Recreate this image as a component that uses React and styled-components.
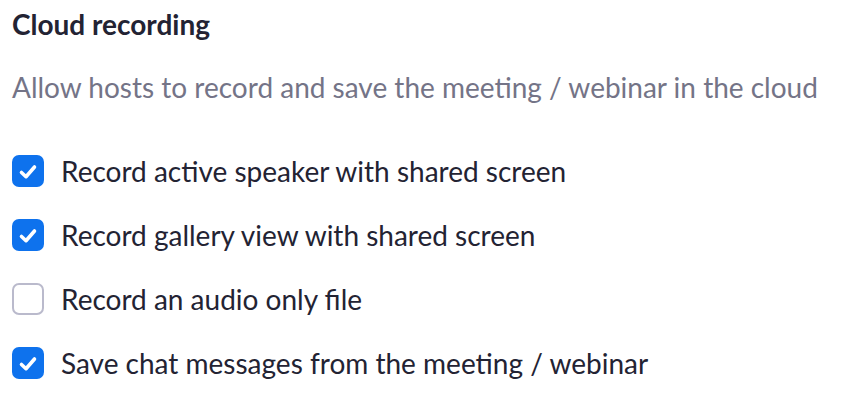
import React from 'react';
import styled, {createGlobalStyle} from "styled-components";

const GlobalStyle = createGlobalStyle`
    body {
        margin: 0;
        background: #fff;
        font-family: Lato, "Open Sans", sans-serif;
    }
`;

const ITEMS = [
    {label: 'Record active speaker with shared screen', checked: true},
    {label: 'Record gallery view with shared screen', checked: true},
    {label: 'Record an audio only file', checked: false},
    {label: 'Save chat messages from the meeting / webinar', checked: true},
];

const Section = styled.div`
    display: flex;
    flex-direction: column;
    padding: 6px 12px 0;
`;

const Title = styled.div`
    font-size: 28px;
    font-weight: 700;
    color: #232333;
    line-height: 36px;
`;

const Description = styled.div`
    font-size: 28px;
    color: #747487;
    line-height: 36px;
    margin-top: 27px;
    margin-bottom: 50px;
`;

const List = styled.div`
    display: flex;
    flex-direction: column;
    gap: 32px;
`;

const Row = styled.label`
    display: flex;
    align-items: center;
    gap: 17px;
    height: 32px;
`;

const Box = styled.span`
    width: 32px;
    height: 32px;
    flex-shrink: 0;
    box-sizing: border-box;
    border-radius: 7px;
    display: flex;
    background: ${({checked}) => checked ? '#0e72ed' : '#fff'};
    border: ${({checked}) => checked ? 'none' : '2px solid #babacc'};
`;

const Label = styled.span`
    font-size: 28px;
    color: #232333;
    line-height: 32px;
`;

const Check = () => (
    <svg width="32" height="32" viewBox="0 0 32 32">
        <path d="M9.5 17.5l4.5 4.2L22.5 12" fill="none" stroke="#fff" strokeWidth="3.6"
              strokeLinecap="round" strokeLinejoin="round"/>
    </svg>
);

const App = () => (
    <>
        <GlobalStyle/>
        <Section>
            <Title>Cloud recording</Title>
            <Description>Allow hosts to record and save the meeting / webinar in the cloud</Description>
            <List>
                {ITEMS.map(item => (
                    <Row key={item.label}>
                        <Box checked={item.checked}>{item.checked && <Check/>}</Box>
                        <Label>{item.label}</Label>
                    </Row>
                ))}
            </List>
        </Section>
    </>
);

export default App;
